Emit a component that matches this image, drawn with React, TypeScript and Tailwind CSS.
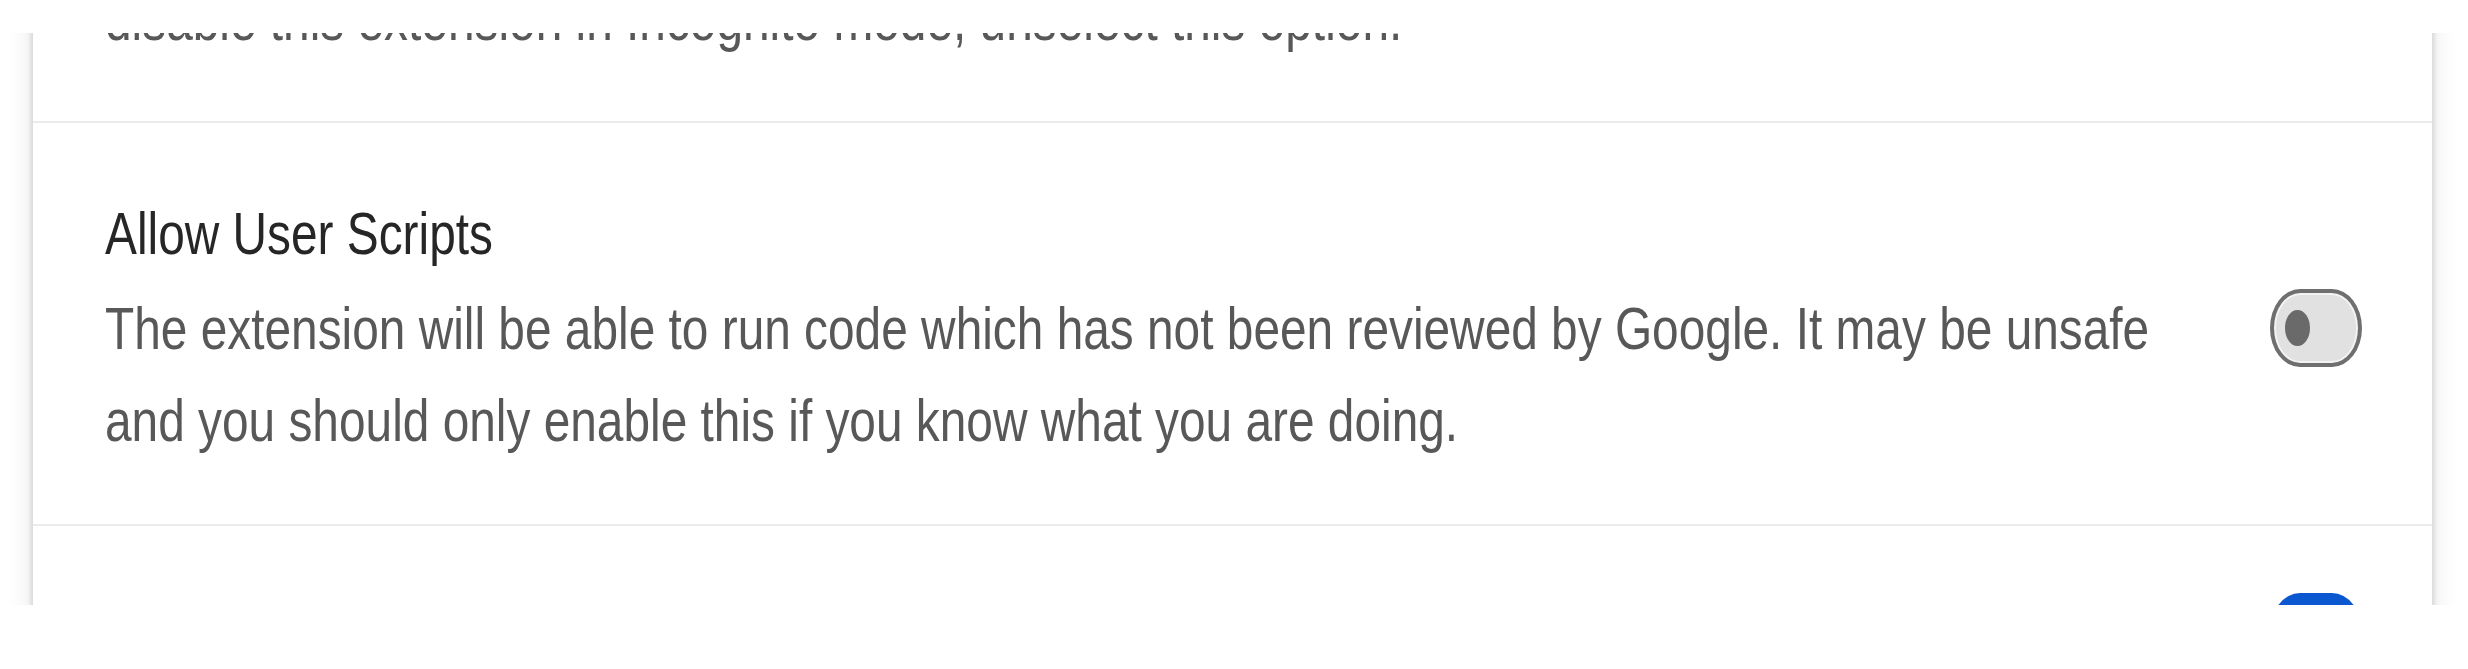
import React from "react"

function Toggle({ on }: { on?: boolean }) {
  if (on) {
    return (
      <div className="flex h-[78px] w-[92px] shrink-0 items-center justify-end rounded-[30px/39px] bg-[#0b57d0] pr-[10px]">
        <div className="h-[52px] w-[38px] rounded-[50%] bg-white" />
      </div>
    )
  }
  return (
    <div className="flex h-[78px] w-[92px] shrink-0 items-center rounded-[30px/39px] border-[4px] border-[#6f6f6f] bg-[#e1e1e1] pl-[11px] shadow-[inset_0_0_0_2px_#f3f3f3]">
      <div className="h-[36px] w-[25px] rounded-[50%] bg-[#6a6a6a]" />
    </div>
  )
}

function Row({
  title,
  lines,
  on,
  className,
}: {
  title: string
  lines: string[]
  on?: boolean
  className: string
}) {
  return (
    <div className={`flex items-center gap-[100px] pl-[72px] pr-[70px] ${className}`}>
      <div className="min-w-0 flex-1">
        {/* the screenshot is squeezed sideways, so the text is too */}
        <div className="origin-left scale-x-[0.797] whitespace-nowrap">
          <div className="text-[#262626]">{title}</div>
          {lines.length > 0 && (
            <div className="mt-[3px] text-[#585858]">
              {lines.map((l) => (
                <div key={l}>{l}</div>
              ))}
            </div>
          )}
        </div>
      </div>
      <Toggle on={on} />
    </div>
  )
}

export default function App() {
  return (
    <div className="h-[669px] w-full overflow-hidden bg-white font-['Liberation_Sans',Arial,sans-serif] text-[60px] leading-[92px]">
      <div className="h-[33px]" />
      <div className="h-[572px] overflow-hidden">
        <div className="-mt-[311px] ml-[33px] mr-[36px] bg-white shadow-[0_0_5px_2px_rgba(0,0,0,0.13),0_0_22px_6px_rgba(0,0,0,0.07)]">
          <Row
            title="Allow in Incognito"
            lines={[
              "Warning: Google Chrome cannot prevent extensions from recording your browsing history. To",
              "disable this extension in Incognito mode, unselect this option.",
            ]}
            on
            className="pt-[65px] pb-[55px]"
          />
          <Row
            title="Allow User Scripts"
            lines={[
              "The extension will be able to run code which has not been reviewed by Google. It may be unsafe",
              "and you should only enable this if you know what you are doing.",
            ]}
            className="border-t-2 border-[#ebebeb] pt-[65px] pb-[57px]"
          />
          <Row
            title="Allow access to file URLs"
            lines={[]}
            on
            className="border-t-2 border-[#ebebeb] pt-[60px] pb-[60px]"
          />
        </div>
      </div>
    </div>
  )
}
